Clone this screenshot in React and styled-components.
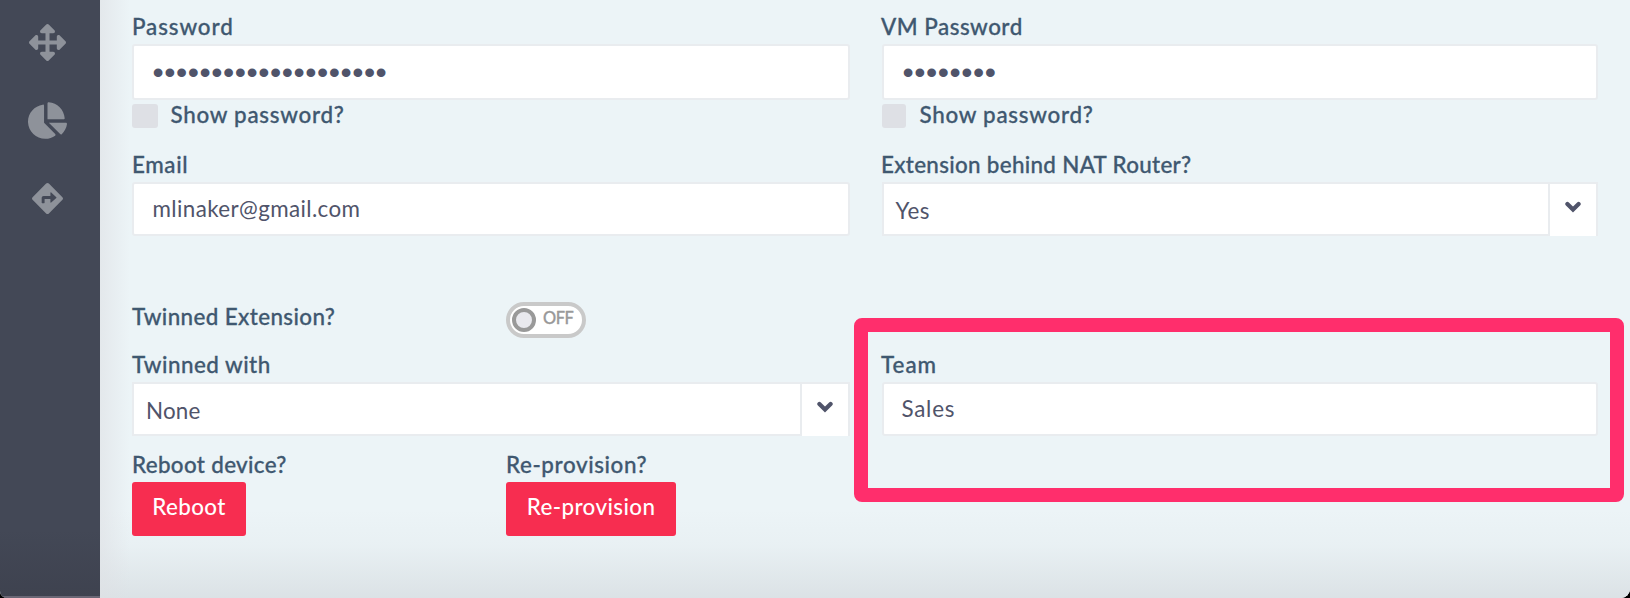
import React from "react";
import styled, { createGlobalStyle } from "styled-components";
import { FaArrowsAlt, FaChartPie, FaDirections } from "react-icons/fa";

const GlobalStyle = createGlobalStyle`
  *, *::before, *::after { box-sizing: border-box; }
  html, body { margin: 0; background: #000; }
  body { font-family: Lato, "Open Sans", sans-serif; font-size: 22.4px; }
`;

const Window = styled.div`
  position: relative;
  display: flex;
  width: 1630px;
  height: 598px;
  overflow: hidden;
  background: #ecf4f7;
  border-radius: 0 0 9px 7px;
`;

const Sidebar = styled.nav`
  display: flex;
  flex-direction: column;
  align-items: center;
  width: 100px;
  flex: none;
  padding: 24px 4.5px 0 0;
  background: linear-gradient(#434856 0, #434856 530px, #3e424f 100%);
  color: #8e929a;
`;

const NavItem = styled.a`
  display: flex;
  align-items: center;
  justify-content: center;
  width: 40px;
  height: 36px;
  margin-bottom: 42px;
`;

const Page = styled.main`
  flex: 1;
  display: grid;
  grid-template-columns: 718px 716px;
  column-gap: 32px;
  align-content: start;
  padding-left: 32px;
  background:
    linear-gradient(to right, rgba(222, 224, 228, 0.6), rgba(222, 224, 228, 0) 30px),
    linear-gradient(to bottom, rgba(208, 214, 218, 0) 510px, rgba(208, 214, 218, 0.12) 545px, rgba(208, 214, 218, 0.6) 598px),
    #ecf4f7;
`;

const Field = styled.div`
  height: ${(p) => p.$height}px;
  padding-top: ${(p) => p.$top || 0}px;
`;

const Label = styled.label`
  display: block;
  height: 32px;
  line-height: 30px;
  font-weight: 500;
  color: #3f5870;
  -webkit-text-stroke: 0.3px currentColor;
  white-space: nowrap;
  letter-spacing: ${(p) => p.$track}px;
  margin-left: ${(p) => p.$shift || 0}px;
`;

const Input = styled.div`
  height: ${(p) => p.$height || 54}px;
  line-height: 50px;
  padding-left: ${(p) => p.$pad || 18.5}px;
  background: #fff;
  border: 2px solid #e9ecef;
  border-radius: 3px;
  color: #50546a;
  white-space: nowrap;
  letter-spacing: ${(p) => p.$track}px;
`;

const Bullets = styled.span`
  display: block;
  font-family: "Liberation Sans", sans-serif;
  font-size: 32px;
  line-height: 53px;
  letter-spacing: 0.54px;
`;

const Check = styled.label`
  display: flex;
  margin-top: 4px;
`;

const Box = styled.span`
  width: ${(p) => p.$width}px;
  height: 24px;
  border-radius: 3px;
  background: #dee0e5;
`;

const CheckText = styled(Label).attrs({ as: "span" })`
  margin: -4px 0 0 ${(p) => p.$gap}px;
`;

const Select = styled.div`
  display: flex;
  height: 54px;
  border: 2px solid #e9ecef;
  border-bottom: 0;
  background: #fff;
  color: #50546a;
`;

const Value = styled.span`
  flex: 1;
  padding-left: ${(p) => p.$pad}px;
  line-height: 54px;
  border-right: 2px solid #e9ecef;
  border-bottom: 2px solid #e9ecef;
  letter-spacing: ${(p) => p.$track}px;
`;

const Arrow = styled.span`
  width: 46px;
  padding-top: 17px;
  display: flex;
  justify-content: center;
  svg { width: 16px; height: 12px; display: block; }
`;

const Pair = styled.div`
  display: grid;
  grid-template-columns: 374px 1fr;
`;

const Toggle = styled.div`
  display: flex;
  align-items: center;
  width: 80px;
  height: 36px;
  padding-left: 2px;
  border: 4px solid #c9c9c9;
  border-radius: 18px;
  background: #fff;
`;

const Knob = styled.span`
  width: 24px;
  height: 24px;
  border: 4px solid #999;
  border-radius: 50%;
  background: #e9e9ee;
`;

const ToggleText = styled.span`
  margin: -4px 0 0 7px;
  font-size: 16.4px;
  font-weight: 500;
  line-height: 20px;
  letter-spacing: -0.4px;
  color: #999;
  -webkit-text-stroke: 0.3px currentColor;
`;

const Button = styled.button`
  display: block;
  width: ${(p) => p.$width}px;
  height: 54px;
  padding: 0 0 6px;
  border: 0;
  border-radius: 3px;
  background: #f72d50;
  color: #fff;
  font: 500 22.4px Lato, sans-serif;
  letter-spacing: ${(p) => p.$track}px;
`;

const Highlight = styled.div`
  position: absolute;
  left: 854px;
  top: 318px;
  width: 770px;
  height: 184px;
  border: 14px solid #ff2e6c;
  border-radius: 8px;
`;

const Edge = styled.div`
  position: absolute;
  left: 0;
  bottom: 0;
  width: 100px;
  height: 2px;
  background: #6a6775;
`;

function Dropdown({ value, track, pad }) {
  return (
    <Select>
      <Value $track={track} $pad={pad}>{value}</Value>
      <Arrow>
        <svg viewBox="0 0 16 12">
          <path d="M2.4 3 8 8.5 13.6 3" fill="none" stroke="currentColor" strokeWidth="4.2" strokeLinecap="round" strokeLinejoin="miter" />
        </svg>
      </Arrow>
    </Select>
  );
}

function PasswordField({ label, track, shift, count, boxWidth, gap }) {
  return (
    <Field $height={150} $top={12}>
      <Label $track={track} $shift={shift}>{label}</Label>
      <Input $height={56}>
        <Bullets>{"•".repeat(count)}</Bullets>
      </Input>
      <Check>
        <Box $width={boxWidth} />
        <CheckText $track={0.73} $gap={gap}>Show password?</CheckText>
      </Check>
    </Field>
  );
}

export default function App() {
  return (
    <>
      <GlobalStyle />
      <Window>
        <Sidebar>
          <NavItem><FaArrowsAlt size={37} /></NavItem>
          <NavItem><FaChartPie size={39} /></NavItem>
          <NavItem><FaDirections size={31} /></NavItem>
        </Sidebar>
        <Page>
          <PasswordField label="Password" track={0.9} count={20} boxWidth={26} gap={12.5} />
          <PasswordField label="VM Password" track={0.5} shift={-1} count={8} boxWidth={24} gap={13.5} />
          <Field $height={152}>
            <Label $track={0.62}>Email</Label>
            <Input $track={0.39}>mlinaker@gmail.com</Input>
          </Field>
          <Field $height={152}>
            <Label $track={0.31} $shift={-1}>Extension behind NAT Router?</Label>
            <Dropdown value="Yes" track={0.4} pad={11.5} />
          </Field>
          <Pair>
            <Label $track={0.39}>Twinned Extension?</Label>
            <Toggle>
              <Knob />
              <ToggleText>OFF</ToggleText>
            </Toggle>
          </Pair>
          <div />
          <Field $height={100} $top={12}>
            <Label $track={0.48}>Twinned with</Label>
            <Dropdown value="None" track={0.2} pad={12} />
          </Field>
          <Field $height={100} $top={12}>
            <Label $track={1} $shift={-1}>Team</Label>
            <Input $track={0.75} $pad={17.5}>Sales</Input>
          </Field>
          <Pair>
            <Field $height={98} $top={12}>
              <Label $track={0.34}>Reboot device?</Label>
              <Button $width={114} $track={0.36}>Reboot</Button>
            </Field>
            <Field $height={98} $top={12}>
              <Label $track={0.6}>Re-provision?</Label>
              <Button $width={170} $track={0.4}>Re-provision</Button>
            </Field>
          </Pair>
        </Page>
        <Highlight />
        <Edge />
      </Window>
    </>
  );
}
